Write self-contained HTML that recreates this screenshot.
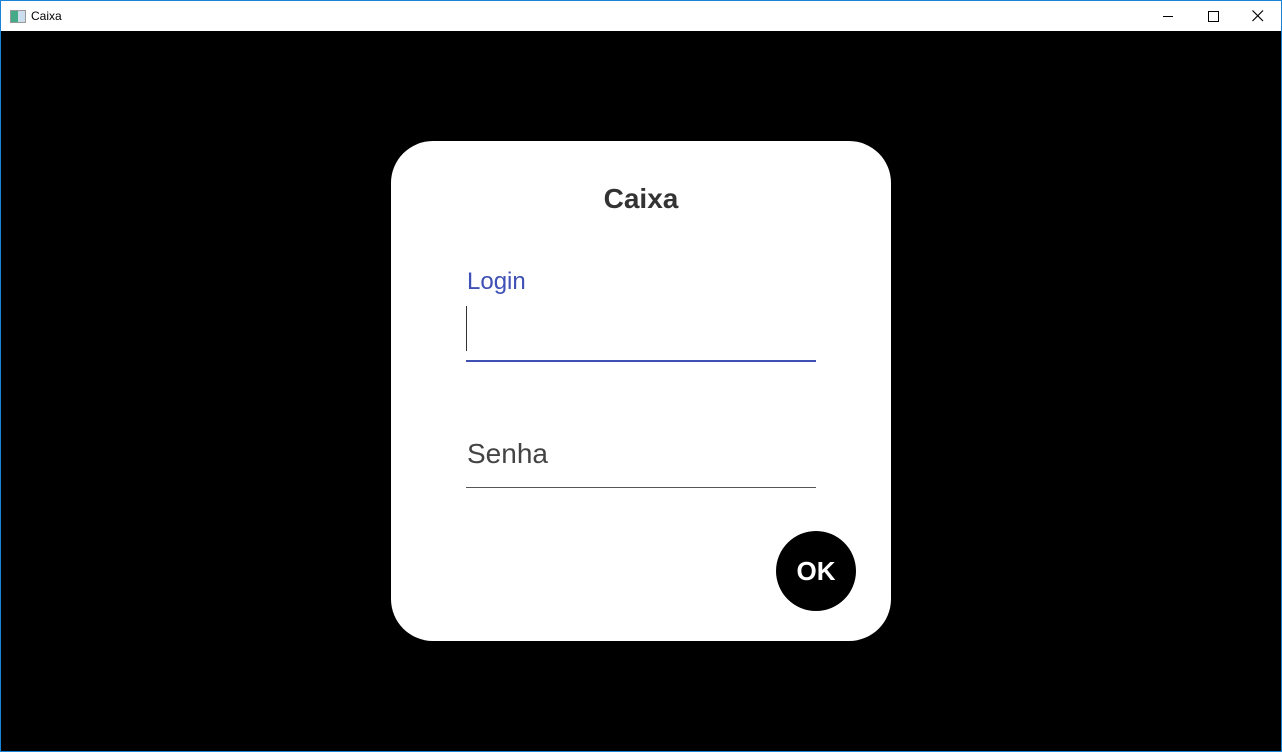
<!DOCTYPE html>
<html><head><style>
body{margin:0;width:1282px;height:752px;overflow:hidden;background:#000;font-family:"Liberation Sans",sans-serif;position:relative}
.win{position:absolute;left:0;top:0;width:1280px;height:750px;border:1px solid #1883d7;}
.tb{position:absolute;left:0;top:0;width:1280px;height:30px;background:#fff}
.abs{position:absolute}
</style></head><body>
<div class="win"><div class="tb">
<div class="abs" style="left:9px;top:9px;width:14px;height:11px;border:1px solid #999;background:linear-gradient(90deg,#4a8 0 50%,#cde 50%)"></div>
<div class="abs" style="left:30px;top:8px;font-size:12px;color:#000">Caixa</div>
<div class="abs" style="left:1162px;top:15px;width:10px;height:1px;background:#000"></div>
<div class="abs" style="left:1207px;top:10px;width:9px;height:9px;border:1px solid #000"></div>
<svg class="abs" style="left:1251px;top:9px" width="12" height="12"><path d="M0.5 0.5L11 11M11 0.5L0.5 11" stroke="#000" stroke-width="1.2"/></svg>
</div></div>
<div class="abs" style="left:391px;top:141px;width:500px;height:500px;background:#fff;border-radius:42px"></div>
<div class="abs" style="left:391px;top:183px;width:500px;text-align:center;font-size:28px;font-weight:bold;color:#333">Caixa</div>
<div class="abs" style="left:467px;top:268px;font-size:24px;color:#3f51b5">Login</div>
<div class="abs" style="left:466px;top:306px;width:1px;height:45px;background:#333"></div>
<div class="abs" style="left:466px;top:360px;width:350px;height:2px;background:#3f51b5"></div>
<div class="abs" style="left:467px;top:438px;font-size:28px;color:#444">Senha</div>
<div class="abs" style="left:466px;top:487px;width:350px;height:1px;background:#555"></div>
<div class="abs" style="left:776px;top:531px;width:80px;height:80px;border-radius:50%;background:#000;color:#fff;font-weight:bold;font-size:26px;line-height:80px;text-align:center">OK</div>
</body></html>
